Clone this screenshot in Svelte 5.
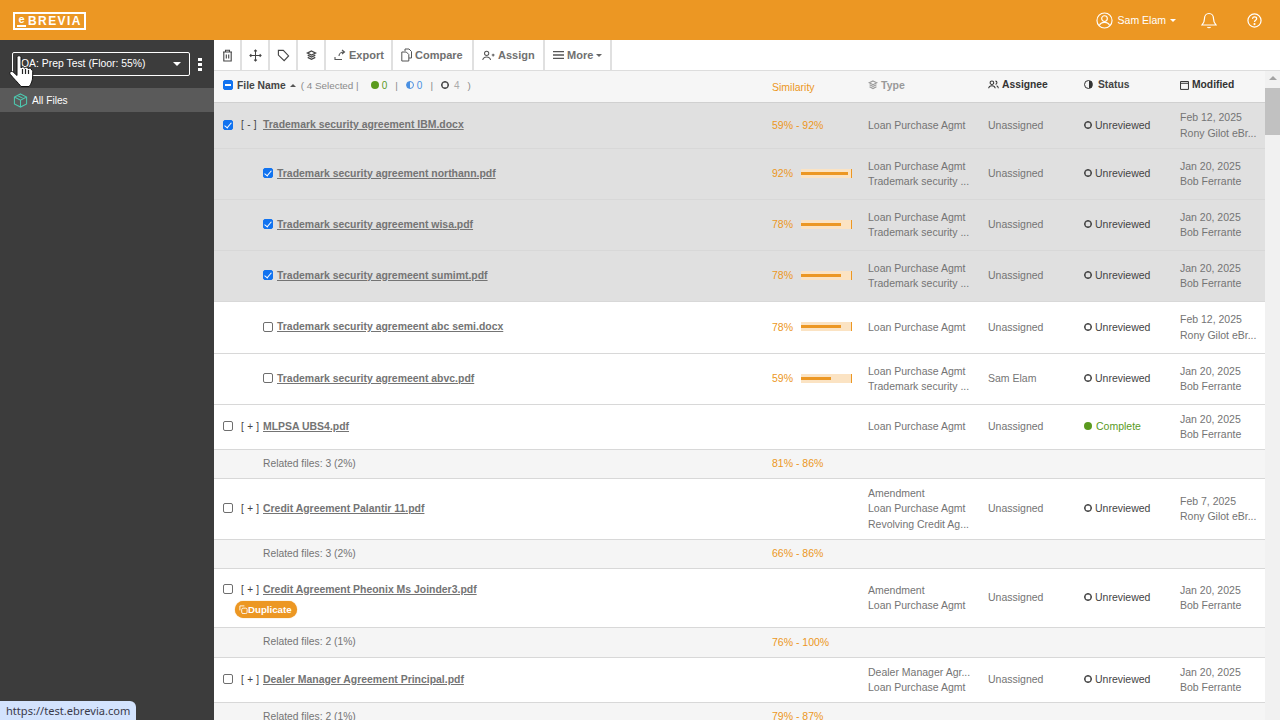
<script>
	const rows = [
		{ kind: 'file', h: 46, sel: true, level: 0, toggle: '[ - ]', name: 'Trademark security agreement IBM.docx', sim: '59% - 92%', types: ['Loan Purchase Agmt'], who: 'Unassigned', date: 'Feb 12, 2025', by: 'Rony Gilot eBr...' },
		{ kind: 'file', h: 51, sel: true, level: 1, name: 'Trademark security agreement northann.pdf', sim: '92%', bar: 92, types: ['Loan Purchase Agmt', 'Trademark security ...'], who: 'Unassigned', date: 'Jan 20, 2025', by: 'Bob Ferrante' },
		{ kind: 'file', h: 51, sel: true, level: 1, name: 'Trademark security agreement wisa.pdf', sim: '78%', bar: 78, types: ['Loan Purchase Agmt', 'Trademark security ...'], who: 'Unassigned', date: 'Jan 20, 2025', by: 'Bob Ferrante' },
		{ kind: 'file', h: 51, sel: true, level: 1, name: 'Trademark security agremeent sumimt.pdf', sim: '78%', bar: 78, types: ['Loan Purchase Agmt', 'Trademark security ...'], who: 'Unassigned', date: 'Jan 20, 2025', by: 'Bob Ferrante' },
		{ kind: 'file', h: 52, level: 1, name: 'Trademark security agremeent abc semi.docx', sim: '78%', bar: 78, types: ['Loan Purchase Agmt'], who: 'Unassigned', date: 'Feb 12, 2025', by: 'Rony Gilot eBr...' },
		{ kind: 'file', h: 51, level: 1, name: 'Trademark security agremeent abvc.pdf', sim: '59%', bar: 59, types: ['Loan Purchase Agmt', 'Trademark security ...'], who: 'Sam Elam', date: 'Jan 20, 2025', by: 'Bob Ferrante' },
		{ kind: 'file', h: 45, level: 0, toggle: '[ + ]', name: 'MLPSA UBS4.pdf', types: ['Loan Purchase Agmt'], who: 'Unassigned', done: true, date: 'Jan 20, 2025', by: 'Bob Ferrante' },
		{ kind: 'rel', h: 29, text: 'Related files: 3 (2%)', sim: '81% - 86%' },
		{ kind: 'file', h: 61, level: 0, toggle: '[ + ]', name: 'Credit Agreement Palantir 11.pdf', types: ['Amendment', 'Loan Purchase Agmt', 'Revolving Credit Ag...'], who: 'Unassigned', date: 'Feb 7, 2025', by: 'Rony Gilot eBr...' },
		{ kind: 'rel', h: 29, text: 'Related files: 3 (2%)', sim: '66% - 86%' },
		{ kind: 'file', h: 59, level: 0, toggle: '[ + ]', dup: true, name: 'Credit Agreement Pheonix Ms Joinder3.pdf', types: ['Amendment', 'Loan Purchase Agmt'], who: 'Unassigned', date: 'Jan 20, 2025', by: 'Bob Ferrante' },
		{ kind: 'rel', h: 30, text: 'Related files: 2 (1%)', sim: '76% - 100%' },
		{ kind: 'file', h: 45, level: 0, toggle: '[ + ]', name: 'Dealer Manager Agreement Principal.pdf', types: ['Dealer Manager Agr...', 'Loan Purchase Agmt'], who: 'Unassigned', date: 'Jan 20, 2025', by: 'Bob Ferrante' },
		{ kind: 'rel', h: 29, text: 'Related files: 2 (1%)', sim: '79% - 87%' }
	];
</script>

{#snippet layers(size)}
	<svg width={size} height={size} viewBox="0 0 16 16" fill="none" stroke="currentColor" stroke-width="1.8"><path d="M8 1.500l6 3-6 3-6-3zM2.500 7.500l5.500 2.800 5.500-2.800M2.500 10.800l5.500 2.800 5.500-2.800"/></svg>
{/snippet}

<div class="page">
	<header class="top">
		<div class="logo"><span class="logo-e">e</span>BREVIA</div>
		<div class="top-right">
			<div class="user">
				<svg width="17" height="17" viewBox="0 0 18 18" fill="none" stroke="#fff" stroke-width="1.200"><circle cx="9" cy="9" r="8"/><circle cx="9" cy="7" r="3"/><path d="M3.500 14.500c1-3 3-3.500 5.500-3.500s4.500.5 5.500 3.500"/></svg>
				<span>Sam Elam</span><i class="caret"></i>
			</div>
			<svg class="bell" width="16" height="17" viewBox="0 0 16 17" fill="none" stroke="#fff" stroke-width="1.200"><path d="M8 1.500c-3 0-4.500 2.500-4.500 5 0 3.500-1 5-2.500 6.500h14c-1.500-1.500-2.500-3-2.500-6.500 0-2.500-1.500-5-4.500-5zM6.500 15c.5 1 2.500 1 3 0"/></svg>
			<svg class="help" width="15" height="15" viewBox="0 0 16 16" fill="none" stroke="#fff" stroke-width="1.300"><circle cx="8" cy="8" r="7"/><path d="M5.800 6.200C6 4.800 7 4.200 8.100 4.200c1.300 0 2.200.8 2.200 1.900 0 1.700-2.300 1.700-2.300 3.500"/><circle cx="8" cy="11.800" r=".5"/></svg>
		</div>
	</header>

	<div class="body">
		<aside class="side">
			<div class="picker-row">
				<div class="picker"><span>QA: Prep Test (Floor: 55%)</span><i class="caret"></i></div>
				<div class="dots"><b></b><b></b><b></b></div>
			</div>
			<div class="all">
				<svg width="15" height="15" viewBox="0 0 16 16" fill="none" stroke="#4dc9b0" stroke-width="1.100"><path d="M8 1l6.500 3.300v7.400L8 15l-6.500-3.300V4.300zM1.500 4.300L8 7.600l6.500-3.300M8 7.600V15M4.700 2.700l6.500 3.300"/></svg>
				<span>All Files</span>
			</div>
		</aside>

		<main class="main">
			<div class="toolbar">
				<button class="tool icon"><svg width="11" height="13" viewBox="0 0 11 13" fill="none" stroke="#444" stroke-width="1.100"><path d="M1 3h9M3.500 3V1.200h4V3M1.800 3v9h7.400V3M4.300 5.500v4M6.700 5.500v4"/></svg></button>
				<button class="tool icon"><svg width="13" height="13" viewBox="0 0 14 14" fill="none" stroke="#444" stroke-width="1.100"><path d="M7 1v12M1 7h12M5.500 2.500L7 1l1.500 1.500M5.500 11.500L7 13l1.500-1.500M2.500 5.500L1 7l1.500 1.500M11.500 5.500L13 7l-1.500 1.500"/></svg></button>
				<button class="tool icon"><svg width="13" height="13" viewBox="0 0 14 14" fill="none" stroke="#444" stroke-width="1.200"><path d="M1.500 1.500h5.300l5.700 6-4.800 5-6.200-6z"/></svg></button>
				<button class="tool icon dark">{@render layers(11)}</button>
				<button class="tool export"><svg width="12" height="12" viewBox="0 0 12 12" fill="none" stroke="#555" stroke-width="1.100"><path d="M1 8v2.500h7M5 7c0-2.500 2-4 5-4M8 1l2.500 2L8 5"/></svg>Export</button>
				<button class="tool compare"><svg width="11" height="14" viewBox="0 0 11 14" fill="none" stroke="#555" stroke-width="1"><path d="M4 3V1h4l2.500 2.500V10H8M.8 4h4.500L7.800 6.500V13H.8z"/></svg>Compare</button>
				<button class="tool assign"><svg width="13" height="11" viewBox="0 0 14 11" fill="none" stroke="#555" stroke-width="1.100"><circle cx="5" cy="3.200" r="2.300"/><path d="M.8 10.300c.4-2.600 2-3.300 4.200-3.300s3.800.7 4.200 3.300M10.500 5h3M12 3.500v3"/></svg>Assign</button>
				<button class="tool more"><svg width="11" height="10" viewBox="0 0 12 10" stroke="#555" stroke-width="1.400"><path d="M0 1.300h12M0 5h12M0 8.700h12"/></svg>More<i class="caret gray"></i></button>
			</div>

			<div class="scroller">
				<div class="table">
					<div class="row head">
						<div class="c-file head-file">
							<span class="check minus"></span>
							<b class="fn">File Name</b><i class="up"></i>
							<span class="summary">( 4 Selected |</span>
							<span class="dot green"></span><span class="n green-t">0</span>
							<span class="summary sep">|</span>
							<span class="half"></span><span class="n blue-t">0</span>
							<span class="summary sep">|</span>
							<span class="ring small"></span><span class="n pale">4</span>
							<span class="summary sep2">)</span>
						</div>
						<div class="c-sim sim-head">Similarity</div>
						<div class="c-type type-head">{@render layers(10)}<span>Type</span></div>
						<div class="c-who hd"><svg width="11" height="9" viewBox="0 0 14 11" fill="none" stroke="#333" stroke-width="1.300"><circle cx="5" cy="3.200" r="2.300"/><path d="M.8 10.300c.4-2.600 2-3.300 4.200-3.300s3.800.7 4.200 3.300M9.500 1.200c2.500 0 2.500 4 0 4M11 7.200c1.400.4 2 1.500 2.200 3"/></svg>Assignee</div>
						<div class="c-status hd"><span class="half black"></span>Status</div>
						<div class="c-mod hd"><svg width="9" height="10" viewBox="0 0 10 11" fill="none" stroke="#333" stroke-width="1.100"><path d="M.6 1.600h8.800v8.800H.6zM.6 3.600h8.800"/></svg>Modified</div>
					</div>

					{#each rows as r}
						{#if r.kind === 'rel'}
							<div class="row rel" style="height:{r.h}px">
								<div class="c-file rel-text">{r.text}</div>
								<div class="c-sim sim">{r.sim}</div>
							</div>
						{:else}
							<div class="row" class:picked={r.sel} style="height:{r.h}px">
								<div class="c-file" class:child={r.level === 1} class:has-dup={r.dup}>
									<div class="file-line">
										<span class="check" class:on={r.sel}></span>
										{#if r.toggle}<span class="toggle">{r.toggle}</span>{/if}
										<span class="name">{r.name}</span>
									</div>
									{#if r.dup}
										<div class="dup"><svg width="9" height="9" viewBox="0 0 10 10" fill="none" stroke="#fff" stroke-width="1"><path d="M1 6V1h5"/><rect x="3" y="3.500" width="6" height="6" rx="1.500"/></svg>Duplicate</div>
									{/if}
								</div>
								<div class="c-sim sim">
									{#if r.sim}<span>{r.sim}</span>{/if}
									{#if r.bar}
										<span class="track"><span class="fill" style="width:{r.bar * 0.51}px"></span></span>
									{/if}
								</div>
								<div class="c-type lines">{#each r.types as t}<div>{t}</div>{/each}</div>
								<div class="c-who">{r.who}</div>
								<div class="c-status">
									{#if r.done}
										<span class="dot green big"></span><span class="complete">Complete</span>
									{:else}
										<span class="ring"></span><span class="unrev">Unreviewed</span>
									{/if}
								</div>
								<div class="c-mod lines"><div>{r.date}</div><div>{r.by}</div></div>
							</div>
						{/if}
					{/each}
				</div>
				<div class="scrollbar">
					<i class="arrow"></i>
					<div class="thumb"></div>
				</div>
			</div>
		</main>
	</div>

	<div class="status-url">https://test.ebrevia.com</div>
	<svg class="hand" width="27" height="32" viewBox="0 0 27 32">
		<path d="M8 2.500c0-2.300 4-2.300 4 0V13c1-1.600 3.200-1.600 3.700.2 1-1.500 3.200-1.300 3.600.6 1-1.200 3.200-.8 3.400 1.200.5 0 1 .5 1 1.500V21c0 4.500-1.500 8-3.500 10.500H12C9 27.500 4.500 23.500 1.200 19.300c-1.300-2 .9-3.800 3-2.300L8 20.500z" fill="#fff" stroke="#111" stroke-width="1"/>
		<path d="M13.500 14v5M16.500 14v5M19.500 15v4" stroke="#222" stroke-width="1.200"/>
	</svg>
</div>

<style>
	:global(body) {
		margin: 0;
		font-family: "Liberation Sans", Arial, sans-serif;
	}
	.page {
		position: relative;
		width: 1280px;
		height: 720px;
		overflow: hidden;
		display: flex;
		flex-direction: column;
		font-size: 10.500px;
		color: #747474;
	}
	.top {
		flex: 0 0 40px;
		background: #ec9723;
		display: flex;
		align-items: center;
		justify-content: space-between;
		padding: 0 18px 0 13px;
	}
	.logo {
		box-sizing: border-box;
		width: 73px;
		height: 18px;
		margin-top: 2px;
		border: 2px solid #fff;
		display: flex;
		align-items: center;
		color: #fff;
		font-weight: 700;
		font-size: 12px;
		letter-spacing: 1.400px;
		line-height: 14px;
		padding-left: 2px;
	}
	.logo-e {
		color: #fff;
		width: 9px;
		height: 10px;
		line-height: 9px;
		font-size: 11px;
		letter-spacing: 0;
		text-align: center;
		border-bottom: 2px solid #fff;
		margin-right: 2px;
	}
	.top-right {
		display: flex;
		align-items: center;
		color: #fff;
	}
	.user {
		display: flex;
		align-items: center;
		gap: 4px;
		font-size: 10.500px;
		margin-right: 25px;
	}
	.user span {
		margin-left: 1px;
	}
	.help {
		margin-left: 30px;
	}
	.caret {
		display: inline-block;
		border: 3px solid transparent;
		border-top: 3px solid #fff;
		border-bottom: 0;
		margin-left: 0;
	}
	.caret.gray {
		border-top-color: #666;
		margin-left: 0;
	}
	.body {
		flex: 1;
		display: flex;
		min-height: 0;
	}
	.side {
		flex: 0 0 214px;
		background: #3c3c3c;
		color: #fff;
		padding-top: 12px;
	}
	.picker-row {
		display: flex;
		align-items: center;
		padding-left: 12px;
		height: 24px;
		margin-bottom: 12px;
	}
	.picker {
		box-sizing: border-box;
		width: 178px;
		height: 24px;
		border: 1px solid #fff;
		border-radius: 2px;
		display: flex;
		align-items: center;
		justify-content: space-between;
		padding: 0 8px 2px 8px;
		font-size: 10.400px;
	}
	.picker .caret {
		border-width: 4px;
		border-bottom: 0;
		margin-top: 2px;
	}
	.dots {
		display: flex;
		flex-direction: column;
		gap: 2px;
		margin-left: 8px;
	}
	.dots b {
		width: 4px;
		height: 3px;
		background: #fff;
	}
	.all {
		height: 24px;
		background: #5a5a5a;
		display: flex;
		align-items: center;
		gap: 4px;
		padding-left: 13px;
		font-size: 10.200px;
	}
	.main {
		flex: 1;
		min-width: 0;
		display: flex;
		flex-direction: column;
	}
	.toolbar {
		flex: 0 0 30px;
		display: flex;
		background: #fff;
		border-bottom: 1px solid #ddd;
	}
	.tool {
		box-sizing: border-box;
		border: 0;
		border-right: 2px solid #e0e0e0;
		background: #fff;
		padding: 0 0 0 8px;
		height: 30px;
		display: flex;
		align-items: center;
		gap: 3px;
		font: 700 11px "Liberation Sans", Arial, sans-serif;
		color: #707070;
	}
	.tool.icon {
		width: 28px;
		padding: 0;
		justify-content: center;
	}
	.tool.export {
		width: 67px;
	}
	.tool.compare {
		width: 81px;
	}
	.tool.assign {
		width: 71px;
	}
	.tool.more {
		width: 67px;
	}
	.tool.dark {
		color: #444;
	}
	.scroller {
		flex: 1;
		display: flex;
		min-height: 0;
		overflow: hidden;
	}
	.table {
		flex: 1;
		min-width: 0;
	}
	.row {
		box-sizing: border-box;
		display: grid;
		grid-template-columns: 558px 96px 120px 96px 96px 85px;
		align-items: center;
		border-bottom: 1px solid #d8d8d8;
		background: #fff;
	}
	.row.head {
		height: 32px;
		background: #f6f6f6;
		border-bottom: 1px solid #d0d0d0;
	}
	.row.picked {
		background: #e0e0e0;
	}
	.row.rel {
		background: #f5f5f5;
	}
	.c-file {
		padding-left: 9px;
		padding-bottom: 2px;
	}
	.c-file.has-dup {
		padding-top: 5px;
		padding-bottom: 0;
	}
	.c-sim,
	.c-who,
	.c-status {
		padding-bottom: 2px;
	}
	.c-file.child {
		padding-left: 49px;
	}
	.file-line,
	.head-file {
		display: flex;
		align-items: center;
	}
	.head-file {
		color: #8a8a8a;
		padding-bottom: 3px;
	}
	.check {
		box-sizing: border-box;
		width: 10px;
		height: 10px;
		border: 1px solid #6e6e6e;
		border-radius: 2px;
		background: #fff;
		flex: none;
		position: relative;
	}
	.check.on,
	.check.minus {
		background: #1173f0;
		border-color: #1173f0;
	}
	.check.on::after {
		content: "";
		position: absolute;
		left: 2px;
		top: 0;
		width: 3px;
		height: 6px;
		border: solid #fff;
		border-width: 0 1.500px 1.500px 0;
		transform: rotate(40deg);
	}
	.check.minus::after {
		content: "";
		position: absolute;
		left: 1px;
		top: 3px;
		width: 6px;
		height: 2px;
		background: #fff;
	}
	.fn {
		margin-left: 4px;
		color: #444;
		font-size: 10.300px;
	}
	.up {
		border: 3px solid transparent;
		border-bottom: 3px solid #555;
		border-top: 0;
		margin: 0 5px 0 4px;
	}
	.summary {
		margin-right: 12px;
		font-size: 9.900px;
	}
	.sep {
		margin: 0 8px;
	}
	.sep2 {
		margin: 0 0 0 8px;
	}
	.dot {
		border-radius: 50%;
		width: 8px;
		height: 8px;
		flex: none;
	}
	.green {
		background: #5a9a1e;
	}
	.big {
		width: 8px;
		height: 8px;
		margin-right: 4px;
	}
	.n {
		margin-left: 3px;
		font-size: 10px;
	}
	.green-t {
		color: #5a9a1e;
	}
	.blue-t {
		color: #4a90e2;
	}
	.pale {
		color: #aaa;
	}
	.half {
		box-sizing: border-box;
		width: 8px;
		height: 8px;
		flex: none;
		border-radius: 50%;
		border: 1px solid #4a90e2;
		background: linear-gradient(90deg, #4a90e2 50%, transparent 50%);
	}
	.half.black {
		width: 9px;
		height: 9px;
		margin-right: 5px;
		border-color: #333;
		background: linear-gradient(90deg, transparent 50%, #333 50%);
	}
	.ring {
		box-sizing: border-box;
		width: 8px;
		height: 8px;
		border: 1px solid #333;
		box-shadow: inset 0 0 0 0.500px #333;
		border-radius: 50%;
		flex: none;
		margin-right: 3px;
	}
	.ring.small {
		margin-right: 0;
	}
	.ring.small + .n {
		margin-left: 5px;
	}
	.toggle {
		box-sizing: border-box;
		width: 22px;
		flex: none;
		color: #444;
		margin-left: 8px;
		font-size: 10px;
		letter-spacing: 0.300px;
		white-space: pre;
		font-weight: 400;
	}
	.name {
		font-weight: 700;
		text-decoration: underline;
		color: #747474;
		font-size: 10.450px;
	}
	.child .name {
		margin-left: 4px;
	}
	.dup {
		display: inline-flex;
		align-items: center;
		height: 17px;
		margin: 6px 0 0 12px;
		padding: 0 5px 0 4px;
		gap: 0;
		background: #ec9723;
		color: #fff;
		border-radius: 9px;
		font-weight: 700;
		font-size: 9.700px;
		box-shadow: 0 0 1px #ec9723;
	}
	.rel-text {
		padding-left: 49px;
		font-size: 10.300px;
	}
	.sim,
	.sim-head {
		color: #ec9723;
	}
	.c-sim {
		display: flex;
		align-items: center;
	}
	.sim-head {
		position: relative;
		top: 1px;
	}
	.track {
		width: 51px;
		height: 9px;
		background: #fbe3c3;
		margin-left: auto;
		margin-right: 16px;
		display: flex;
		align-items: center;
		border-right: 1px solid #ec9723;
		box-sizing: border-box;
	}
	.fill {
		display: block;
		height: 3px;
		background: #ec9723;
		max-width: 47px;
	}
	.type-head {
		color: #999;
		display: flex;
		align-items: center;
		gap: 3px;
		font-weight: 700;
		position: relative;
		top: -2px;
	}
	.hd {
		color: #333;
		font-weight: 700;
		display: flex;
		align-items: center;
		gap: 3px;
		position: relative;
		top: -2px;
		padding-bottom: 0;
		font-size: 10.300px;
	}
	.hd .half {
		margin-right: 2px;
	}
	.lines {
		line-height: 15.500px;
		white-space: nowrap;
	}
	.c-status {
		display: flex;
		align-items: center;
		color: #444;
	}
	.complete {
		color: #5a9a1e;
	}
	.unrev {
		color: #444;
	}
	.scrollbar {
		flex: 0 0 15px;
		background: #f1f1f1;
		position: relative;
	}
	.arrow {
		display: block;
		width: 0;
		border: 4px solid transparent;
		border-bottom: 4px solid #a3a3a3;
		border-top: 0;
		margin: 5px auto 5px;
	}
	.thumb {
		height: 47px;
		margin-top: 8px;
		background: #c1c1c1;
	}
	.status-url {
		position: absolute;
		left: 0;
		bottom: 0;
		height: 19px;
		padding: 0 6px;
		background: #d3e3fd;
		border-top-right-radius: 6px;
		color: #3a3a4a;
		font: 11.100px/20px "Noto Sans", "DejaVu Sans", sans-serif;
		display: flex;
		align-items: center;
	}
	.hand {
		position: absolute;
		left: 9px;
		top: 55px;
	}
</style>
